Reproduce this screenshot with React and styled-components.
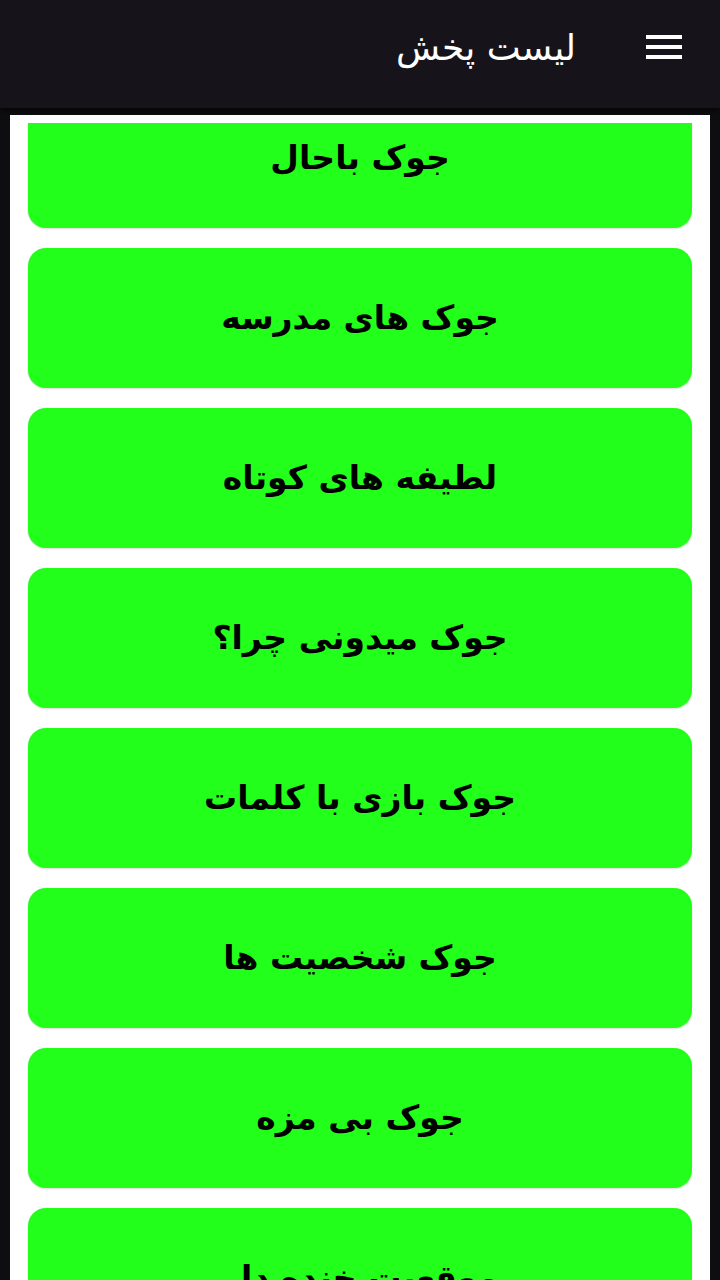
import React, { useLayoutEffect, useRef } from 'react'
import styled, { createGlobalStyle } from 'styled-components'

const items = [
  'جوک باحال',
  'جوک های مدرسه',
  'لطیفه های کوتاه',
  'جوک میدونی چرا؟',
  'جوک بازی با کلمات',
  'جوک شخصیت ها',
  'جوک بی مزه',
  'موقعیت خنده دار',
  'جوک خانوادگی',
]

const App = () => {
  const listRef = useRef(null)

  // the list is shown scrolled a little, as in the screenshot
  useLayoutEffect(() => {
    if (listRef.current) listRef.current.scrollTop = 55
  }, [])

  return (
    <>
      <GlobalStyle />
      <Page>
        <Header>
          <Bar>
            <MenuButton aria-label="menu">
              <span />
              <span />
              <span />
            </MenuButton>
            <Title>لیست پخش</Title>
          </Bar>
        </Header>
        <Panel>
          <List ref={listRef}>
            {items.map((item) => (
              <Item key={item}>{item}</Item>
            ))}
          </List>
        </Panel>
      </Page>
    </>
  )
}

export default App

const GlobalStyle = createGlobalStyle`
  html, body {
    margin: 0;
    padding: 0;
    background-color: #0e0d10;
  }
  * {
    box-sizing: border-box;
  }
`

const Page = styled.div`
  height: 100vh;
  display: flex;
  flex-direction: column;
  direction: rtl;
  font-family: "DejaVu Sans", "Noto Sans", sans-serif;
  background-color: #0e0d10;
  overflow: hidden;
`

const Header = styled.header`
  flex: none;
  height: 108px;
  background-color: #16141a;
  padding-bottom: 12px;
  box-shadow: 0 3px 6px rgba(0, 0, 0, 0.6);
`

const Bar = styled.div`
  height: 96px;
  display: flex;
  align-items: center;
  padding-right: 38px;
  gap: 70px;
`

const MenuButton = styled.div`
  width: 36px;
  display: flex;
  flex-direction: column;
  gap: 6px;
  margin-top: -2px;
  span {
    display: block;
    height: 4px;
    background-color: #ffffff;
  }
`

const Title = styled.h1`
  margin: 0;
  color: #ffffff;
  font-size: 36px;
  font-weight: normal;
  line-height: 1;
`

const Panel = styled.main`
  flex: 1;
  min-height: 0;
  margin: 7px 10px 0;
  padding-top: 8px;
  background-color: #ffffff;
  display: flex;
  flex-direction: column;
`

const List = styled.div`
  flex: 1;
  min-height: 0;
  overflow-y: auto;
  scrollbar-width: none;
  padding: 20px 18px;
  display: flex;
  flex-direction: column;
  gap: 20px;
  &::-webkit-scrollbar {
    display: none;
  }
`

const Item = styled.div`
  flex: none;
  height: 140px;
  border-radius: 18px;
  background-color: #22ff1a;
  box-shadow: 0 1px 2px rgba(0, 0, 0, 0.15);
  display: flex;
  align-items: center;
  justify-content: center;
  padding-bottom: 2px;
  color: #000000;
  font-size: 33px;
  font-weight: bold;
`
